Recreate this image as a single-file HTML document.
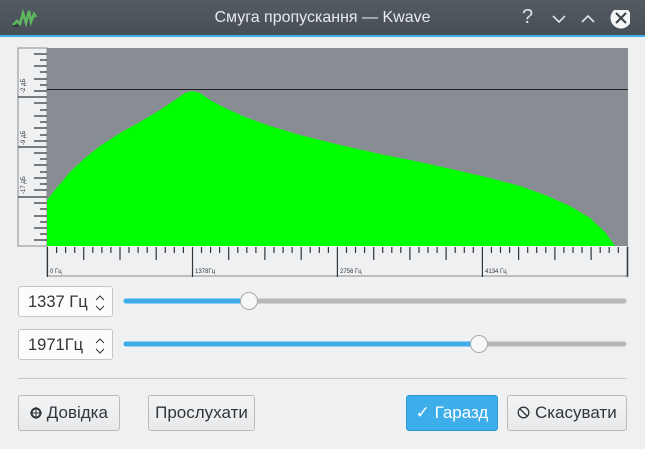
<!DOCTYPE html>
<html><head><meta charset="utf-8"><style>
body{margin:0;width:645px;height:449px;background:#eff0f1;font-family:"Liberation Sans","DejaVu Sans",sans-serif;position:relative;overflow:hidden}
.tb{position:absolute;left:0;top:0;width:645px;height:35px;background:linear-gradient(#535b63,#474e56);border-bottom:2px solid #3daee9}
.title{position:absolute;left:0;width:645px;top:9px;text-align:center;color:#e8eaec;font-size:16px}
.spin{position:absolute;left:18px;width:95px;height:31px;border:1px solid #c3c5c7;border-radius:3px;background:#fcfcfc;font-size:16.5px;color:#31363b;box-sizing:border-box;padding:6px 0 0 9px}
.spin svg{position:absolute;right:6px;top:6px}
.btn{position:absolute;top:395px;height:36px;box-sizing:border-box;border:1px solid #b8babd;border-radius:3px;background:linear-gradient(#f3f4f5,#e8e9ea);font-size:17px;color:#31363b;text-align:center;line-height:34px}
</style></head><body>
<div class="tb">
<svg style="position:absolute;left:12px;top:8px" width="26" height="20"><path d="M1 17 L5 13 L8 16 L11 5 L14 15 L17 3 L19 14 L22 6 L24 9" stroke="#5fb85f" stroke-width="2.5" fill="none"/><path d="M1 18h6" stroke="#222" stroke-width="1"/></svg>
<div class="title">Смуга пропускання — Kwave</div>
<div style="position:absolute;left:522px;top:6px;color:#dfe1e3;font-size:20px">?</div>
<svg style="position:absolute;left:550px;top:10px" width="80" height="20"><path d="M3 6 L9 12 L15 6" stroke="#e0e2e4" stroke-width="1.6" fill="none"/><path d="M32 12 L38 6 L44 12" stroke="#e0e2e4" stroke-width="1.6" fill="none"/><circle cx="71" cy="8" r="10.5" fill="#f4f5f6"/><path d="M66 3 L76 13 M76 3 L66 13" stroke="#3a4047" stroke-width="2"/></svg>
</div>
<svg style="position:absolute;left:0;top:0" width="645" height="290">
<rect x="18" y="48" width="29" height="198" fill="#eff0f1" stroke="#8a8d90"/>
<rect x="47" y="48" width="581" height="198" fill="#888c93"/>
<line x1="47" y1="89.5" x2="628" y2="89.5" stroke="#222" stroke-width="1"/>
<path d="M47 246 L47 200 L55 190 L70 172 L85 158 L100 146 L120 133 L140 122 L160 110 L175 100 L185 93 L192 91 L200 93 L210 100 L225 108 L245 117 L270 126 L300 135 L340 145 L380 154 L420 162 L460 171 L490 178 L520 186 L545 195 L570 206 L590 218 L605 232 L615 246 Z" fill="#00ff00"/>
<g stroke="#31363b" stroke-width="1.2">
<path d="M34 54h13M40 60h7M34 66h13M40 72h7M34 79h13M40 85h7M34 91h13M18 97h29M34 103h13M40 110h7M34 116h13M40 122h7M34 128h13M40 135h7M34 141h13M18 147h29M34 153h13M40 159h7M34 165h13M40 172h7M34 178h13M40 184h7M18 197h29M34 190h13M34 203h13M40 209h7M34 216h13M40 222h7M34 228h13M40 234h7M34 240h13"/>
</g>
<text transform="translate(25,93) rotate(-90)" font-size="6" fill="#31363b">-2 дБ</text>
<text transform="translate(25,145) rotate(-90)" font-size="6" fill="#31363b">-9 дБ</text>
<text transform="translate(25,194) rotate(-90)" font-size="6" fill="#31363b">-17 дБ</text>
<path d="M47 246V276H628V246" fill="none" stroke="#8a8d90"/>
<g id="t" stroke="#31363b" stroke-width="1.2"></g>
<text x="50" y="273" font-size="6" fill="#31363b">0 Гц</text>
<text x="195" y="273" font-size="6" fill="#31363b">1378Гц</text>
<text x="340" y="273" font-size="6" fill="#31363b">2756 Гц</text>
<text x="485" y="273" font-size="6" fill="#31363b">4134 Гц</text>
</svg>
<script>
var g=document.getElementById('t'),s='';for(var i=0;i<=64;i++){var x=47.5+i*9.06;var h=i%16==0?30:(i%4==0?13:6);s+='M'+x.toFixed(1)+' 247v'+h;}g.innerHTML='<path d="'+s+'"/>';
</script>
<div class="spin" style="top:286px">1337 Гц<svg width="12" height="20"><path d="M2 7 L6 3 L10 7 M2 13 L6 17 L10 13" stroke="#31363b" fill="none"/></svg></div>
<div class="spin" style="top:329px">1971Гц<svg width="12" height="20"><path d="M2 7 L6 3 L10 7 M2 13 L6 17 L10 13" stroke="#31363b" fill="none"/></svg></div>
<svg style="position:absolute;left:0;top:280px" width="645" height="80">
<line x1="126" y1="21" x2="624" y2="21" stroke="#b6b8ba" stroke-width="5" stroke-linecap="round"/>
<line x1="126" y1="21" x2="249" y2="21" stroke="#3daee9" stroke-width="5" stroke-linecap="round"/>
<circle cx="249" cy="21" r="8.5" fill="#f6f7f7" stroke="#a8abad"/>
<line x1="126" y1="64" x2="624" y2="64" stroke="#b6b8ba" stroke-width="5" stroke-linecap="round"/>
<line x1="126" y1="64" x2="479" y2="64" stroke="#3daee9" stroke-width="5" stroke-linecap="round"/>
<circle cx="479" cy="64" r="8.5" fill="#f6f7f7" stroke="#a8abad"/>
</svg>
<div style="position:absolute;left:18px;top:378px;width:609px;height:1px;background:#c7c9cb"></div>
<div class="btn" style="left:18px;width:102px"><svg width="12" height="12" style="vertical-align:-1px"><circle cx="6" cy="6" r="4.5" stroke="#31363b" stroke-width="2" fill="none"/><path d="M6 0v12M0 6h12" stroke="#31363b" stroke-width="1"/></svg> Довідка</div>
<div class="btn" style="left:148px;width:107px">Прослухати</div>
<div class="btn" style="left:406px;width:92px;background:#3daee9;border-color:#2e98d0;color:#fff">✓ Гаразд</div>
<div class="btn" style="left:507px;width:120px"><svg width="13" height="13" style="vertical-align:-1px"><circle cx="6.5" cy="6.5" r="5.3" stroke="#31363b" stroke-width="1.3" fill="none"/><path d="M3 3L10 10" stroke="#31363b" stroke-width="1.3"/></svg> Скасувати</div>
</body></html>
